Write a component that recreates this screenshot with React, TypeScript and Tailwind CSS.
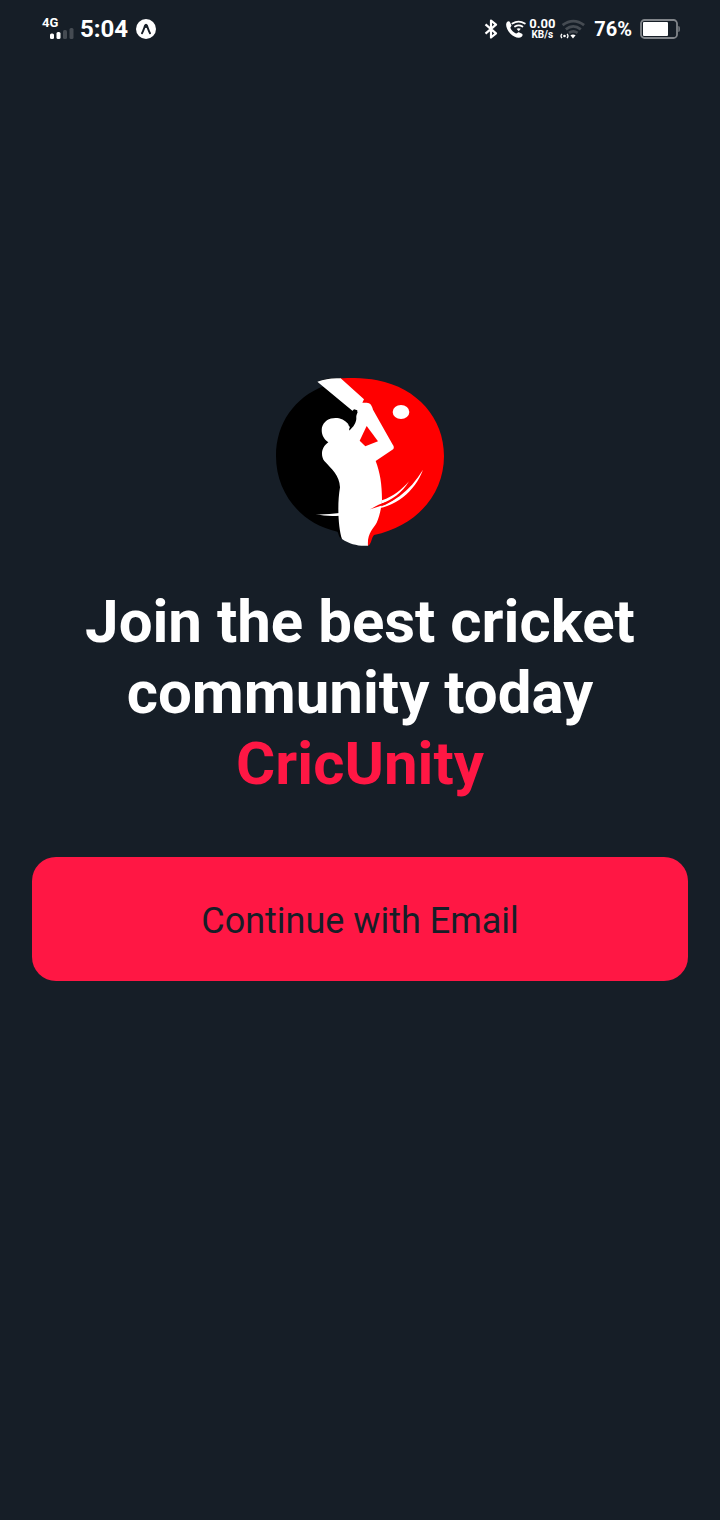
import React from "react";

function SignalIcon() {
  return (
    <svg viewBox="0 0 24 12" className="h-3 w-6" aria-hidden="true">
      <rect x="0" y="5.5" width="4" height="5.5" rx="1.5" fill="#fff" />
      <rect x="6.5" y="4" width="4" height="7" rx="1.5" fill="#fff" />
      <rect x="13" y="2" width="4" height="9" rx="1.5" fill="#454b52" />
      <rect x="19.5" y="0" width="4" height="11" rx="1.5" fill="#454b52" />
    </svg>
  );
}

function ExpoIcon() {
  return (
    <svg viewBox="0 0 20 20" className="size-5" aria-hidden="true">
      <circle cx="10" cy="10" r="10" fill="#fff" />
      <path
        d="M6 14.2C7.2 12.2 8.1 9.3 9 6.8Q10 4.8 11 6.8C11.9 9.3 12.8 12.2 14 14.2"
        fill="none"
        stroke="#161e27"
        strokeWidth="2"
        strokeLinecap="round"
      />
      <path d="M8.8 7Q10 4 11.2 7L11.7 9.3 10 8.7 8.3 9.3Z" fill="#161e27" />
    </svg>
  );
}

function BluetoothIcon() {
  return (
    <svg viewBox="0 0 14 20" className="h-5 w-3.5" aria-hidden="true">
      <path
        d="M1.5 5.3 12 14.3 7 18.5V1.5L12 5.7 1.5 14.7"
        fill="none"
        stroke="#fff"
        strokeWidth="2.2"
        strokeLinejoin="round"
      />
    </svg>
  );
}

function WifiCallIcon() {
  return (
    <svg viewBox="0 0 20 20" className="size-5" fill="none" aria-hidden="true">
      <path
        d="M.8 3.2C1.8 2.2 3.4 1.9 4 3.2L5.4 6.2C5.8 7.3 4.2 8 4.4 9C5.4 11.6 7.6 13.6 10 14.4C11.2 14.6 11.6 12.9 12.8 13.2L16 14.8C17 15.6 16.6 16.8 15.6 17.8C12.6 20 7.4 17.6 4.2 14.4C1 11-1 6 .8 3.2Z"
        fill="#fff"
      />
      <path
        d="M6.4 4.6Q12.6 .6 18.8 4.6M9 7.6Q12.7 5.2 16.4 7.6"
        stroke="#fff"
        strokeWidth="1.8"
        strokeLinecap="round"
      />
      <path d="M10.6 9.8Q12.7 8.6 14.8 9.8L12.7 12.3Z" fill="#fff" />
    </svg>
  );
}

function WifiIcon() {
  return (
    <svg viewBox="0 0 26 20" className="h-5 w-6.5" fill="none" aria-hidden="true">
      <path
        d="M2.6 6.2Q13.3-2 24.1 6.2M5.8 10.3Q13.3 4.5 20.8 10.3M9 13.9Q13.3 11 17.6 13.9"
        stroke="#454b52"
        strokeWidth="2.8"
      />
      <path d="M10.4 16.2Q13 14.8 15.6 16.2L13 19.4Z" fill="#fff" />
      <circle cx="4.5" cy="17" r="1.3" fill="#fff" />
      <path
        d="M2 14.9Q0 17 2 19.1M7 14.9Q9 17 7 19.1"
        stroke="#fff"
        strokeWidth="1.3"
      />
    </svg>
  );
}

function BatteryIcon() {
  return (
    <svg viewBox="0 0 40 20" className="h-5 w-10" aria-hidden="true">
      <rect x="1" y="1" width="36" height="18" rx="3.5" fill="none" stroke="#81858a" strokeWidth="1.8" />
      <rect x="3" y="3" width="25" height="14" rx="1" fill="#fff" />
      <path d="M38.4 7Q39.8 7 39.8 9V11Q39.8 13 38.4 13Z" fill="#81858a" />
    </svg>
  );
}

function StatusBar() {
  return (
    <header className="flex h-14 items-center justify-between pt-0.5 pl-10.5 pr-10 text-white">
      <div className="flex items-center">
        <div className="flex h-6 w-9 flex-col">
          <span className="text-[13px] leading-3 font-bold">4G</span>
          <span className="-mt-px flex pl-2">
            <SignalIcon />
          </span>
        </div>
        <time className="ml-0.5 text-2xl leading-7 font-bold">5:04</time>
        <span className="ml-2">
          <ExpoIcon />
        </span>
      </div>
      <div className="flex items-center">
        <BluetoothIcon />
        <span className="ml-2">
          <WifiCallIcon />
        </span>
        <span className="ml-0.5 flex w-7 flex-col items-center font-bold">
          <span className="text-[13px] leading-3">0.00</span>
          <span className="text-[10px] leading-[10px]">KB/s</span>
        </span>
        <span className="ml-1">
          <WifiIcon />
        </span>
        <span className="ml-2 text-xl leading-6 font-bold">76%</span>
        <span className="ml-2">
          <BatteryIcon />
        </span>
      </div>
    </header>
  );
}

function Logo() {
  return (
    <svg viewBox="24 24 504 504" className="size-42" role="img" aria-label="CricUnity logo">
      <path
        d="M148 35C155 40 160 43 168 48C80 82 24 160 24 258C24 370 100 462 208 485C213 491 211 501 222 507L260 500 300 100 215 24C188 22 168 28 148 35Z"
        fill="#000"
      />
      <path
        d="M215 25C245 23 290 23 328 31C448 54 528 145 528 258C528 374 445 468 318 495C310 504 311 519 302 527L290 515 270 300 272 100Z"
        fill="#f00"
      />
      <path
        d="M148 35C170 28 190 23 218 25L288 88 283 98C291 100 297 96 303 100C310 103 313 112 315 119L373 222C379 230 379 236 372 240L323 273C336 307 342 343 342 390C340 417 333 444 326 458C315 477 297 490 300 527C271 529 246 523 222 507C211 475 207 405 216 352C215 316 190 296 169 273C157 256 160 231 181 217C164 205 159 188 162 172C168 150 190 141 213 145C229 149 239 158 246 170L244 180C257 172 265 157 265 144C264 137 267 132 269 125L254 123Z"
        fill="#fff"
      />
      <path d="M296 168 330 214 292 229 275 212Z" fill="#f00" />
      <path d="M253 123 258 118 268 121 267 129 262 129Z" fill="#000" />
      <path d="M239 163 246 166 248 177 243 182 246 171Z" fill="#000" />
      <ellipse cx="399" cy="126" rx="25" ry="21" fill="#fff" />
      <path d="M143 433Q178 434 215 429V437Q178 440 143 433Z" fill="#fff" />
      <path d="M306 419C370 405 425 365 465 299C440 365 383 413 306 419Z" fill="#fff" />
      <path d="M342 391C377 379 400 360 423 334C402 370 372 389 339 402Z" fill="#fff" />
      <path d="M306 418C324 409 333 403 343 400C361 396 374 389 383 385C367 398 340 408 306 418Z" fill="#f00" />
    </svg>
  );
}

export default function App() {
  return (
    <div className="flex min-h-screen flex-col bg-[#161e27] font-[Roboto,sans-serif]">
      <StatusBar />
      <main className="flex flex-1 flex-col items-center px-8 pt-80.5">
        <Logo />
        <h1 className="mt-10 text-center text-[60px] leading-[71px] font-bold text-white">
          Join the best cricket
          <br />
          community today
          <br />
          <span className="text-[#ff1744]">CricUnity</span>
        </h1>
        <button
          type="button"
          className="mt-14.5 w-full rounded-3xl bg-[#ff1744] px-6 pt-10.5 pb-9.5 text-4xl leading-11 text-[#161e27]"
        >
          Continue with Email
        </button>
      </main>
    </div>
  );
}
